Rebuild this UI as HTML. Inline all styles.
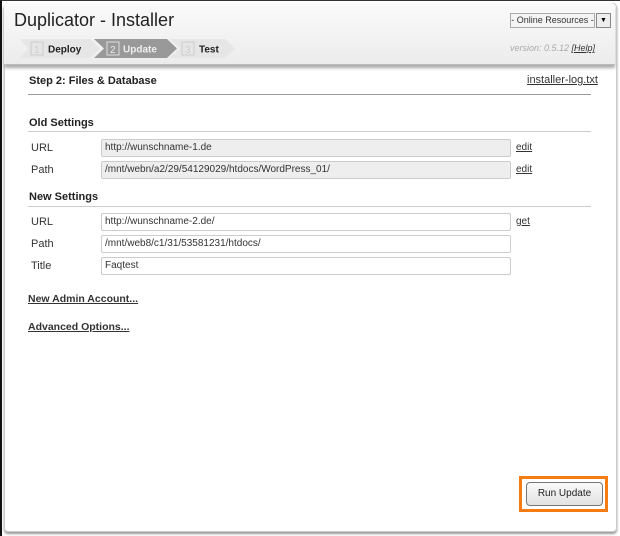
<!DOCTYPE html>
<html><head><style>
body{margin:0;width:620px;height:536px;background:#fff;font-family:"Liberation Sans",Arial,sans-serif;position:relative;overflow:hidden}
.frame{position:absolute;left:0;top:0;width:620px;height:536px;box-sizing:border-box;border-left:2px solid #111;border-top:1px solid #333}
.panel{position:absolute;left:4px;top:3px;width:611px;height:527px;border:1px solid #ccc;border-radius:4px;background:#fff;box-shadow:0 2px 2px #999}
.hdr{position:absolute;left:4px;top:3px;width:611px;height:61px;background:linear-gradient(#fafafa,#ececec);border-bottom:1px solid #bbb;box-shadow:0 3px 3px #aaa;border-radius:4px 4px 0 0}
.abs{position:absolute;white-space:nowrap}
.t{font-size:18px;color:#222}
.lbl{font-size:11px;color:#333}
.inp{position:absolute;left:101px;width:410px;border:1px solid #ccc;border-radius:2px;font-size:10px;color:#333;line-height:16px;padding-left:3px;box-sizing:border-box;height:18px}
.ro{background:#eee}
.lnk{color:#333;text-decoration:underline}
.h{font-size:11px;font-weight:bold;color:#222}
.line{position:absolute;left:28px;width:563px;height:1px;background:#ccc}
</style></head><body>
<div class="panel"></div>
<div class="hdr"></div>
<div class="frame"></div>
<div class="abs t" style="left:14px;top:10px">Duplicator - Installer</div>
<svg class="abs" style="left:20px;top:39px" width="220" height="19">
<polygon points="0,0 70,0 80,9.5 70,19 0,19 8,9.5" fill="#e6e6e6"/>
<polygon points="74,0 147,0 157,9.5 147,19 74,19 84,9.5" fill="#999"/>
<polygon points="150,0 205,0 215,9.5 205,19 150,19 160,9.5" fill="#e6e6e6"/>
<rect x="11" y="3" width="12" height="13" fill="none" stroke="#ccc"/>
<text x="14" y="14" font-size="10" fill="#ccc" font-family="Liberation Sans">1</text>
<text x="28" y="13.5" font-size="10" font-weight="bold" fill="#222" font-family="Liberation Sans">Deploy</text>
<rect x="87" y="3" width="12" height="13" fill="none" stroke="#ddd"/>
<text x="90" y="14" font-size="10" fill="#eee" font-family="Liberation Sans">2</text>
<text x="103" y="13.5" font-size="10" font-weight="bold" fill="#eee" font-family="Liberation Sans">Update</text>
<rect x="162" y="3" width="12" height="13" fill="none" stroke="#ccc"/>
<text x="165" y="14" font-size="10" fill="#ccc" font-family="Liberation Sans">3</text>
<text x="179" y="13.5" font-size="10" font-weight="bold" fill="#222" font-family="Liberation Sans">Test</text>
</svg>
<div class="abs" style="left:510px;top:13px;width:83px;height:13px;border:1px solid #aaa;background:#f4f4f4;font-size:9px;line-height:13px;text-align:center;color:#333">- Online Resources -</div>
<div class="abs" style="left:596px;top:13px;width:13px;height:13px;border:1px solid #888;background:#eee;font-size:7px;line-height:13px;text-align:center">▼</div>
<div class="abs" style="left:510px;top:43px;font-size:9px;color:#aaa;font-style:italic">version: 0.5.12 <span style="color:#333;text-decoration:underline">[Help]</span></div>
<div class="abs" style="left:29px;top:75px;font-size:11px;font-weight:bold;color:#222">Step 2: Files &amp; Database</div>
<div class="abs lnk" style="left:527px;top:74px;font-size:11px">installer-log.txt</div>
<div class="line" style="top:94px;background:#999"></div>
<div class="abs h" style="left:29px;top:117px">Old Settings</div>
<div class="line" style="top:131px"></div>
<div class="abs lbl" style="left:31px;top:142px">URL</div>
<div class="inp ro" style="top:139px">http://wunschname-1.de</div>
<div class="abs lnk" style="left:516px;top:142px;font-size:10px">edit</div>
<div class="abs lbl" style="left:31px;top:164px">Path</div>
<div class="inp ro" style="top:161px">/mnt/webn/a2/29/54129029/htdocs/WordPress_01/</div>
<div class="abs lnk" style="left:516px;top:164px;font-size:10px">edit</div>
<div class="abs h" style="left:29px;top:191px">New Settings</div>
<div class="line" style="top:206px"></div>
<div class="abs lbl" style="left:31px;top:216px">URL</div>
<div class="inp" style="top:213px">http://wunschname-2.de/</div>
<div class="abs lnk" style="left:516px;top:216px;font-size:10px">get</div>
<div class="abs lbl" style="left:31px;top:238px">Path</div>
<div class="inp" style="top:235px">/mnt/web8/c1/31/53581231/htdocs/</div>
<div class="abs lbl" style="left:31px;top:260px">Title</div>
<div class="inp" style="top:257px">Faqtest</div>
<div class="abs lnk" style="left:28px;top:293px;font-size:10.5px;font-weight:bold">New Admin Account...</div>
<div class="abs lnk" style="left:28px;top:321px;font-size:10.5px;font-weight:bold">Advanced Options...</div>
<div class="abs" style="left:519px;top:476px;width:83px;height:30px;border:3px solid #f57c12"></div>
<div class="abs" style="left:526px;top:482px;width:75px;height:22px;border:1px solid #777;border-radius:4px;background:linear-gradient(#fafafa,#e2e2e2);font-size:10px;line-height:22px;text-align:center;color:#222">Run Update</div>
</body></html>
